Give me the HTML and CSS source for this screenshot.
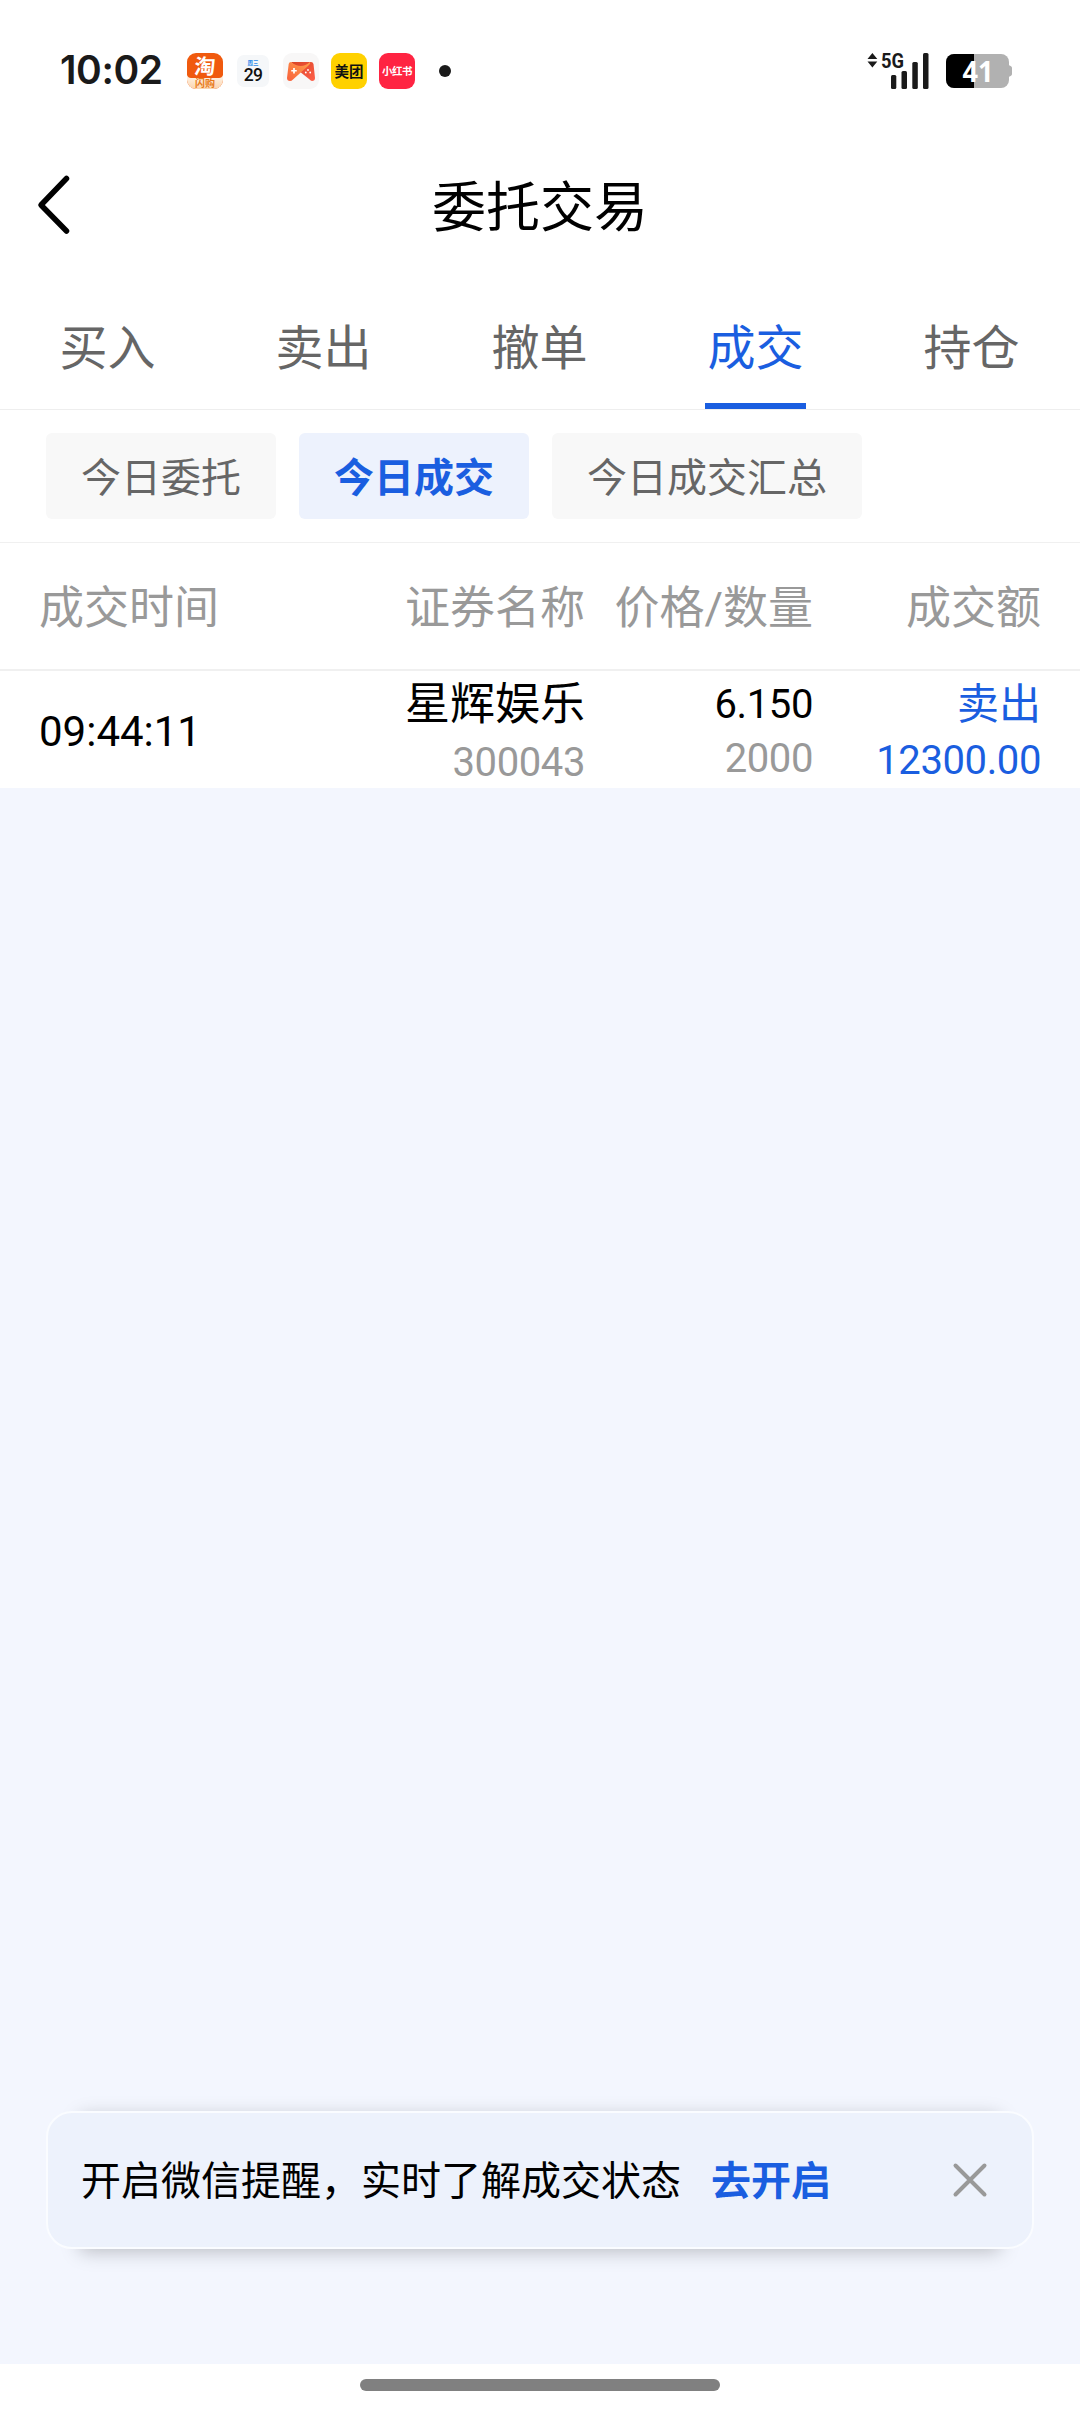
FILE: index.html
```html
<!DOCTYPE html>
<html lang="zh-CN">
<head>
<meta charset="utf-8">
<title>委托交易</title>
<link rel="stylesheet" href="styles.css">
</head>
<body>
<div class="screen">
  <div class="status">
    <span class="clock">10:02</span>
    <svg class="app-icon" width="36" height="36" viewBox="0 0 36 36">
      <defs>
        <clipPath id="tile"><rect width="36" height="36" rx="9"/></clipPath>
        <linearGradient id="cream" x1="0" y1="0" x2="0" y2="1"><stop offset="0" stop-color="#fff6ea"/><stop offset="1" stop-color="#fbd3ae"/></linearGradient>
      </defs>
      <g clip-path="url(#tile)">
        <rect width="36" height="36" fill="#f05a0e"/>
        <path d="M0 22Q1 25 4 25H32Q35 25 36 22V36H0Z" fill="url(#cream)"/>
      </g>
      <text class="glyph" x="17.500" y="20.500" font-size="21" fill="#fff" text-anchor="middle" transform="skewX(-5) translate(1.5 0)">淘</text>
      <text class="glyph" x="18" y="34" font-size="10" fill="#e87a1a" text-anchor="middle">闪购</text>
    </svg>
    <svg class="app-icon calendar" width="32" height="32" viewBox="0 0 32 32">
      <rect width="32" height="32" rx="7" fill="#f5f7f9"/>
      <text class="glyph" x="16" y="9.600" font-size="5.500" fill="#2b8bea" text-anchor="middle">周三</text>
      <text class="num" x="16" y="25.500" font-size="17.500" font-weight="500" letter-spacing="-.8" fill="#111" text-anchor="middle">29</text>
    </svg>
    <svg class="app-icon" width="36" height="36" viewBox="0 0 36 36">
      <defs>
        <linearGradient id="padL" x1="0" y1="1" x2="1" y2="0"><stop offset="0" stop-color="#f8603c"/><stop offset="1" stop-color="#ffa04a"/></linearGradient>
        <linearGradient id="padR" x1="0" y1="0" x2="1" y2="1"><stop offset="0" stop-color="#d94425"/><stop offset="1" stop-color="#ff604a"/></linearGradient>
      </defs>
      <rect width="36" height="36" rx="9" fill="#f8f7f7"/>
      <path d="M8 9H28Q30 9 30.500 11L32 25Q32 28 29 28Q28 28 26 26L16 18Z" fill="url(#padR)"/>
      <path d="M8 9Q6 9 5.700 11L4 25Q4 28 7 28Q8.500 28 10 26.500L25 13Q28 10 27 9Q18 17 8 9Z" fill="url(#padL)"/>
      <path d="M11 15V20.500M8.250 17.750H13.750" stroke="#fff" stroke-width="1.700"/>
      <g fill="#fff"><circle cx="25" cy="17" r=".9"/><circle cx="22.800" cy="19.500" r=".9"/><circle cx="27.200" cy="19.500" r=".9"/></g>
    </svg>
    <svg class="app-icon" width="36" height="36" viewBox="0 0 36 36">
      <rect width="36" height="36" rx="9" fill="#ffd100"/>
      <text class="glyph" x="18" y="23.500" font-size="14.500" fill="#111" text-anchor="middle">美团</text>
    </svg>
    <svg class="app-icon" width="36" height="36" viewBox="0 0 36 36">
      <rect width="36" height="36" rx="9" fill="#ff2442"/>
      <text class="glyph" x="18" y="22" font-size="10.500" letter-spacing="-.5" fill="#fff" text-anchor="middle">小红书</text>
    </svg>
    <span class="more-dot"></span>
    <svg class="signal" width="62" height="38" viewBox="867 51 62 38" fill="#1a1a1a">
      <path d="M872.400 52L877.300 58H867.500ZM872.400 66.500L877.300 60.500H867.500Z"/>
      <text class="num" x="881" y="66.500" font-size="20.500" font-weight="700" textLength="23" lengthAdjust="spacingAndGlyphs">5G</text>
      <rect x="891" y="74" width="5.300" height="14" rx="1.500"/>
      <rect x="901.500" y="70" width="5.500" height="18" rx="1.500"/>
      <rect x="912.300" y="61" width="5.500" height="27" rx="1.500"/>
      <rect x="923" y="52" width="5.500" height="36" rx="1.500"/>
    </svg>
    <svg class="battery" width="66" height="34" viewBox="0 0 66 34">
      <defs><clipPath id="cell"><rect width="63" height="34" rx="8"/></clipPath></defs>
      <path d="M62 11Q66 12 66 14V20Q66 22 62 23Z" fill="#b1b1b1"/>
      <g clip-path="url(#cell)"><rect width="63" height="34" fill="#b1b1b1"/><rect width="28" height="34" fill="#000"/></g>
      <text class="charge" x="32" y="28" font-size="29" fill="#fff" text-anchor="middle" textLength="31" lengthAdjust="spacingAndGlyphs">41</text>
    </svg>
  </div>

  <header class="navbar">
    <svg class="back" width="36" height="60" viewBox="0 0 36 60"><path d="M32.500 4.500L7 31L32.500 57" fill="none" stroke="#000" stroke-width="5.500" stroke-linecap="round" stroke-linejoin="round"/></svg>
    <h1 class="title">委托交易</h1>
  </header>

  <nav class="tabs">
    <span class="tab">买入</span>
    <span class="tab">卖出</span>
    <span class="tab">撤单</span>
    <span class="tab active">成交</span>
    <span class="tab">持仓</span>
  </nav>

  <div class="chips">
    <span class="chip">今日委托</span>
    <span class="chip active">今日成交</span>
    <span class="chip">今日成交汇总</span>
  </div>

  <div class="grid head">
    <span class="time">成交时间</span><span>证券名称</span><span>价格/数量</span><span>成交额</span>
  </div>
  <div class="grid row">
    <span class="time">09:44:11</span>
    <div class="cell stock"><span class="name">星辉娱乐</span><span class="code">300043</span></div>
    <div class="cell"><span class="price">6.150</span><span class="qty">2000</span></div>
    <div class="cell blue"><span class="side">卖出</span><span class="amount">12300.00</span></div>
  </div>

  <main class="empty">
    <div class="notice">
      <span>开启微信提醒，实时了解成交状态</span>
      <b class="open">去开启</b>
      <svg class="close" width="38" height="38" viewBox="0 0 38 38"><path d="M4.500 4.500L33.500 33.500M33.500 4.500L4.500 33.500" stroke="#999" stroke-width="4" stroke-linecap="round"/></svg>
    </div>
  </main>
  <footer class="home"><span class="pill"></span></footer>
</div>
</body>
</html>
```
FILE: styles.css
```css
* { box-sizing: border-box; }
body {
  margin: 0;
  background: #fff;
  color: #000;
  font-family: Roboto, "Noto Sans CJK SC", sans-serif;
}
.screen { width: 1080px; height: 2412px; display: flex; flex-direction: column; overflow: hidden; }
svg { display: block; flex: none; overflow: visible; }
.glyph { font-family: "Noto Sans CJK SC", sans-serif; font-weight: 700; }
.num { font-family: Roboto, sans-serif; }
.charge { font-family: "Open Sans", sans-serif; font-weight: 700; }

.status { height: 142px; padding: 0 68px 0 60px; display: flex; align-items: center; }
.clock { width: 127px; padding-bottom: 2px; font: 600 39px/48px Inter, sans-serif; letter-spacing: -.4px; color: #1a1a1a; }
.app-icon { margin-right: 12px; }
.calendar { margin: 0 14px 0 2px; }
.more-dot { width: 12px; height: 12px; border-radius: 50%; background: #1a1a1a; margin-left: 12px; }
.signal { margin-left: auto; margin-right: 17px; }

.navbar { height: 124px; padding: 0 34px; display: grid; grid-template-columns: 60px 1fr 60px; align-items: center; }
.title { margin: 0; padding-top: 10px; text-align: center; font-size: 54px; font-weight: 400; line-height: 64px; }

.tabs { height: 144px; display: flex; border-bottom: 1px solid #eee; }
.tab { flex: 1; display: flex; flex-direction: column; align-items: center; font-size: 48px; line-height: 60px; padding: 53px 1px 0 0; color: #666; }
.tab.active { color: #1a5ee0; }
.tab.active::after { content: ""; width: 101px; height: 6px; margin-top: auto; background: #1a5ee0; }

.chips { height: 133px; padding: 23px 46px; display: flex; gap: 23px; border-bottom: 1px solid #f0f0f0; }
.chip { height: 86px; padding: 0 35px; border-radius: 6px; background: #f8f8f8; color: #666; font-size: 40px; line-height: 92px; }
.chip.active { background: #edf2fd; color: #1a5ee0; font-weight: 700; }

.grid { display: grid; grid-template-columns: 300px 246px 228px 228px; padding: 0 39px; text-align: right; }
.time { text-align: left; }
.head { height: 128px; border-bottom: 2px solid #f0f0f0; color: #999; font-size: 45px; line-height: 132px; }
.row { height: 117px; line-height: 54px; font-size: 40px; }
.row .time { font-size: 42px; line-height: 122px; }
.cell { display: flex; flex-direction: column; align-items: flex-end; padding-top: 7px; }
.stock { gap: 4px; }
.name { font-size: 45px; }
.code, .qty { color: #999; }
.price, .code, .qty, .amount { letter-spacing: -.4px; }
.side { font-size: 42px; }
.blue { color: #1a5ee0; gap: 2px; }

.empty { flex: 1; background: #f3f6fe; display: flex; flex-direction: column; justify-content: flex-end; padding: 0 46px 115px; isolation: isolate; }
.notice { position: relative; height: 138px; border: 2px solid #fafcff; border-radius: 26px; background: #edf2fc; padding: 0 43px 0 33px; display: flex; align-items: center; font-size: 40px; line-height: 56px; }
.notice::before { content: ""; position: absolute; z-index: -1; inset: 0 32px; box-shadow: 0 4px 18px rgba(0, 0, 0, .25); }
.notice span, .open { padding-top: 3px; }
.open { margin-left: 30px; color: #1a5ee0; }
.close { margin-left: auto; }
.home { height: 48px; display: flex; justify-content: center; padding-top: 15px; }
.pill { width: 360px; height: 12px; border-radius: 6px; background: #808080; }
```
